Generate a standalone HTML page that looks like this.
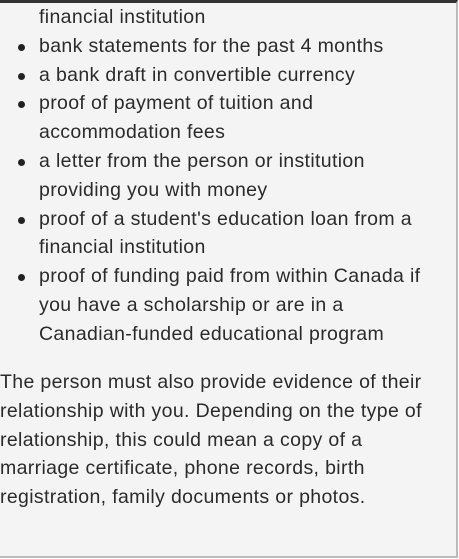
<!DOCTYPE html>
<html><head><style>
html,body{margin:0;padding:0;}
body{width:459px;height:559px;background:#fff;position:relative;overflow:hidden;}
.box{position:absolute;left:0;top:0;width:456px;height:553px;background:#f4f4f4;border-top:3px solid #333;border-right:2px solid #bbb;border-bottom:2px solid #bbb;}
.t{font-family:"Liberation Sans",sans-serif;font-size:19.5px;letter-spacing:0.35px;color:#2b2b2b;line-height:28.8px;white-space:nowrap;}
ul{margin:0;padding:0 0 0 39px;list-style:none;position:absolute;top:0px;left:0;}
li{position:relative;}
li.b::before{content:"";position:absolute;left:-21px;top:12px;width:7px;height:7px;border-radius:50%;background:#222;}
p{position:absolute;left:0;top:365px;margin:0;}
</style></head><body>
<div class="box">
<ul class="t">
<li>financial institution</li>
<li class="b">bank statements for the past 4 months</li>
<li class="b">a bank draft in convertible currency</li>
<li class="b">proof of payment of tuition and<br>accommodation fees</li>
<li class="b">a letter from the person or institution<br>providing you with money</li>
<li class="b">proof of a student's education loan from a<br>financial institution</li>
<li class="b">proof of funding paid from within Canada if<br>you have a scholarship or are in a<br>Canadian-funded educational program</li>
</ul>
<p class="t">The person must also provide evidence of their<br>relationship with you. Depending on the type of<br>relationship, this could mean a copy of a<br>marriage certificate, phone records, birth<br>registration, family documents or photos.</p>
</div>
</body></html>
